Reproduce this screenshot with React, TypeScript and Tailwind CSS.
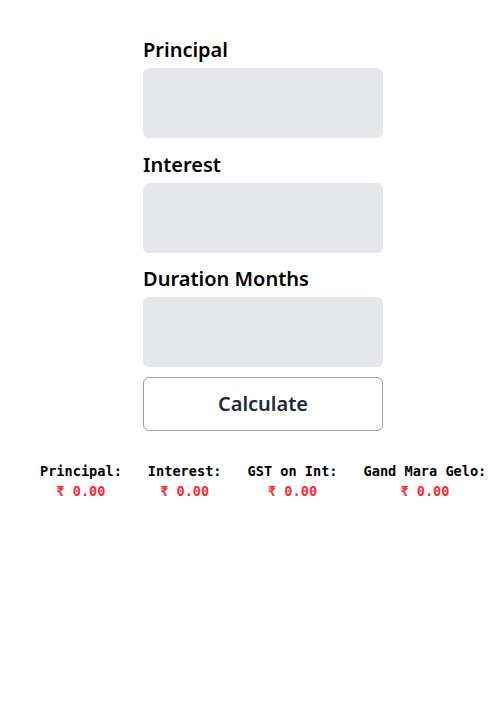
import { useState } from "react";

const fields = ["Principal", "Interest", "Duration Months"];

const results = [
  { label: "Principal:", value: "₹ 0.00" },
  { label: "Interest:", value: "₹ 0.00" },
  { label: "GST on Int:", value: "₹ 0.00" },
  { label: "Gand Mara Gelo:", value: "₹ 0.00" },
];

export default function App() {
  const [values, setValues] = useState<string[]>(["", "", ""]);

  return (
    <div className="min-h-[707px] bg-white font-['Noto_Sans',sans-serif]">
      <div className="ml-[143px] flex w-[240px] flex-col pt-[36px]">
        {fields.map((name, i) => (
          <div key={name} className="mb-[12.5px] flex flex-col">
            <label className="mb-[4px] text-[20px] font-semibold leading-[28px] text-black">
              {name}
            </label>
            <input
              value={values[i]}
              onChange={(e) => {
                const next = [...values];
                next[i] = e.target.value;
                setValues(next);
              }}
              className="h-[70px] rounded-md bg-gray-200 px-3 outline-none"
            />
          </div>
        ))}

        <button className="-mt-[2.5px] h-[54px] rounded-md border border-gray-400 bg-white text-[20px] font-semibold text-gray-800">
          Calculate
        </button>
      </div>

      <div className="mt-[30px] flex gap-[26px] pl-[40px] font-['DejaVu_Sans_Mono',monospace] text-[13.6px] font-bold leading-[20px]">
        {results.map((r) => (
          <div key={r.label} className="flex flex-col items-center">
            <span className="text-black">{r.label}</span>
            <span className="text-red-500">{r.value}</span>
          </div>
        ))}
      </div>
    </div>
  );
}
